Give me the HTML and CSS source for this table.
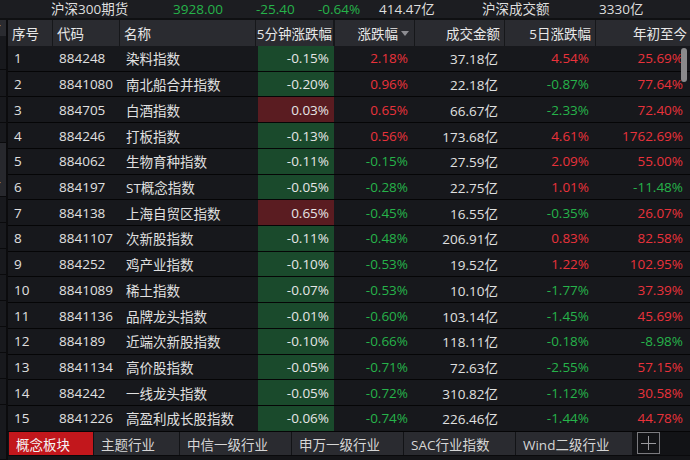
FILE: index.html
```html
<!DOCTYPE html>
<html lang="zh">
<head>
<meta charset="utf-8">
<link rel="stylesheet" href="styles.css">
</head>
<body>
<div class="top-bar">
  <span class="t-name">沪深300期货</span>
  <span class="green">3928.00</span>
  <span class="green">-25.40</span>
  <span class="green">-0.64%</span>
  <span>414.47亿</span>
  <span>沪深成交额</span>
  <span>3330亿</span>
</div>
<div class="main">
  <div class="strip">
    <div class="s-head"><span class="frag">今</span></div>
    <div class="s-dark s-h34"></div>
    <div class="s-dark s-h27"></div>
    <div class="s-dark s-h26"></div>
    <div class="s-dark s-h20"></div>
    <div class="s-light"><span class="frag frag-low">今</span></div>
    <div class="s-dark s-h26"></div>
    <div class="s-dark s-h26"></div>
    <div class="s-dark s-h26"></div>
    <div class="s-dark s-h26"></div>
    <div class="s-dark s-h26"></div>
    <div class="s-dark s-h26"></div>
    <div class="s-dark s-h26"></div>
    <div class="s-dark s-h26"></div>
    <div class="s-dark s-fill"></div>
  </div>
  <div class="panel">
    <div class="grid-row head">
      <div class="hc">序号</div>
      <div class="hc">代码</div>
      <div class="hc">名称</div>
      <div class="hc r tight">5分钟涨跌幅</div>
      <div class="hc r">涨跌幅<span class="tri"></span></div>
      <div class="hc r">成交金额</div>
      <div class="hc r">5日涨跌幅</div>
      <div class="hc r last">年初至今</div>
    </div>
    <div class="body">
      <div class="grid-row row"><div class="c">1</div><div class="c">884248</div><div class="c">染料指数</div><div class="c5"><div class="bg-g">-0.15%</div></div><div class="c r red">2.18%</div><div class="c r">37.18亿</div><div class="c r red">4.54%</div><div class="c r red">25.69%</div></div>
      <div class="grid-row row"><div class="c">2</div><div class="c">8841080</div><div class="c">南北船合并指数</div><div class="c5"><div class="bg-g">-0.20%</div></div><div class="c r red">0.96%</div><div class="c r">22.18亿</div><div class="c r green">-0.87%</div><div class="c r red">77.64%</div></div>
      <div class="grid-row row"><div class="c">3</div><div class="c">884705</div><div class="c">白酒指数</div><div class="c5"><div class="bg-r">0.03%</div></div><div class="c r red">0.65%</div><div class="c r">66.67亿</div><div class="c r green">-2.33%</div><div class="c r red">72.40%</div></div>
      <div class="grid-row row"><div class="c">4</div><div class="c">884246</div><div class="c">打板指数</div><div class="c5"><div class="bg-g">-0.13%</div></div><div class="c r red">0.56%</div><div class="c r">173.68亿</div><div class="c r red">4.61%</div><div class="c r red">1762.69%</div></div>
      <div class="grid-row row"><div class="c">5</div><div class="c">884062</div><div class="c">生物育种指数</div><div class="c5"><div class="bg-g">-0.11%</div></div><div class="c r green">-0.15%</div><div class="c r">27.59亿</div><div class="c r red">2.09%</div><div class="c r red">55.00%</div></div>
      <div class="grid-row row"><div class="c">6</div><div class="c">884197</div><div class="c">ST概念指数</div><div class="c5"><div class="bg-g">-0.05%</div></div><div class="c r green">-0.28%</div><div class="c r">22.75亿</div><div class="c r red">1.01%</div><div class="c r green">-11.48%</div></div>
      <div class="grid-row row"><div class="c">7</div><div class="c">884138</div><div class="c">上海自贸区指数</div><div class="c5"><div class="bg-r">0.65%</div></div><div class="c r green">-0.45%</div><div class="c r">16.55亿</div><div class="c r green">-0.35%</div><div class="c r red">26.07%</div></div>
      <div class="grid-row row"><div class="c">8</div><div class="c">8841107</div><div class="c">次新股指数</div><div class="c5"><div class="bg-g">-0.11%</div></div><div class="c r green">-0.48%</div><div class="c r">206.91亿</div><div class="c r red">0.83%</div><div class="c r red">82.58%</div></div>
      <div class="grid-row row"><div class="c">9</div><div class="c">884252</div><div class="c">鸡产业指数</div><div class="c5"><div class="bg-g">-0.10%</div></div><div class="c r green">-0.53%</div><div class="c r">19.52亿</div><div class="c r red">1.22%</div><div class="c r red">102.95%</div></div>
      <div class="grid-row row"><div class="c">10</div><div class="c">8841089</div><div class="c">稀土指数</div><div class="c5"><div class="bg-g">-0.07%</div></div><div class="c r green">-0.53%</div><div class="c r">10.10亿</div><div class="c r green">-1.77%</div><div class="c r red">37.39%</div></div>
      <div class="grid-row row"><div class="c">11</div><div class="c">8841136</div><div class="c">品牌龙头指数</div><div class="c5"><div class="bg-g">-0.01%</div></div><div class="c r green">-0.60%</div><div class="c r">103.14亿</div><div class="c r green">-1.45%</div><div class="c r red">45.69%</div></div>
      <div class="grid-row row"><div class="c">12</div><div class="c">884189</div><div class="c">近端次新股指数</div><div class="c5"><div class="bg-g">-0.10%</div></div><div class="c r green">-0.66%</div><div class="c r">118.11亿</div><div class="c r green">-0.18%</div><div class="c r green">-8.98%</div></div>
      <div class="grid-row row"><div class="c">13</div><div class="c">8841134</div><div class="c">高价股指数</div><div class="c5"><div class="bg-g">-0.05%</div></div><div class="c r green">-0.71%</div><div class="c r">72.63亿</div><div class="c r green">-2.55%</div><div class="c r red">57.15%</div></div>
      <div class="grid-row row"><div class="c">14</div><div class="c">884242</div><div class="c">一线龙头指数</div><div class="c5"><div class="bg-g">-0.05%</div></div><div class="c r green">-0.72%</div><div class="c r">310.82亿</div><div class="c r green">-1.12%</div><div class="c r red">30.58%</div></div>
      <div class="grid-row row"><div class="c">15</div><div class="c">8841226</div><div class="c">高盈利成长股指数</div><div class="c5"><div class="bg-g">-0.06%</div></div><div class="c r green">-0.74%</div><div class="c r">226.46亿</div><div class="c r green">-1.44%</div><div class="c r red">44.78%</div></div>
      <div class="scroll-thumb"></div>
    </div>
    <div class="tabs">
      <div class="tab active">概念板块</div>
      <div class="tab">主题行业</div>
      <div class="tab">中信一级行业</div>
      <div class="tab">申万一级行业</div>
      <div class="tab">SAC行业指数</div>
      <div class="tab">Wind二级行业</div>
      <div class="plus"><span class="ph"></span><span class="pv"></span></div>
    </div>
    <div class="foot"></div>
  </div>
</div>
</body>
</html>
```

FILE: styles.css
```css
* { box-sizing: border-box; }
html, body {
  margin: 0;
  padding: 0;
  width: 690px;
  height: 460px;
  overflow: hidden;
  background: #141518;
  font-family: "Open Sans", "Noto Sans CJK SC", sans-serif;
  font-size: 13.5px;
  color: #e2e2e2;
}
.green { color: #26b34a; }
.red { color: #e9323b; }

.top-bar {
  height: 18px;
  background: #1c1d21;
  border-bottom: 2px solid #0f1012;
  box-sizing: content-box;
  display: grid;
  grid-template-columns: 122px 83px 62px 61px 103px 117px auto;
  align-items: center;
  padding-left: 51px;
  line-height: 16px;
  white-space: nowrap;
  color: #dedede;
}

.main {
  display: flex;
  height: 440px;
}
.strip {
  width: 8px;
  border-right: 2px solid #0b0b0d;
  display: flex;
  flex-direction: column;
  overflow: hidden;
  flex: none;
}
.s-head {
  height: 16px;
  background: #2a2b30;
  overflow: hidden;
  line-height: 16px;
}
.frag {
  display: block;
  margin-left: -11px;
  font-size: 12px;
  color: #cfcfcf;
}
.frag-low { margin-top: 34px; }
.s-dark {
  background: #18191d;
  border-bottom: 1px solid #0a0a0c;
}
.s-h34 { height: 34px; }
.s-h27 { height: 27px; }
.s-h26 { height: 26px; }
.s-h20 { height: 20px; }
.s-fill { flex: 1; }
.s-light {
  height: 54px;
  background: #27282d;
  overflow: hidden;
  line-height: 16px;
  border-bottom: 1px solid #0a0a0c;
}

.panel {
  width: 682px;
  display: flex;
  flex-direction: column;
}
.grid-row {
  display: grid;
  grid-template-columns: 45px 67px 136px 79px 80px 90px 91px 94px;
}
.head {
  height: 26px;
  background: #2a2b30;
}
.hc {
  display: flex;
  align-items: center;
  padding-left: 4px;
  border-right: 1px solid #16171a;
  color: #e8e8e8;
  white-space: nowrap;
}
.hc.r { justify-content: flex-end; padding-right: 4px; padding-left: 0; }
.hc.tight { padding-right: 1px; border-right-width: 2px; }
.hc.last { border-right: none; padding-right: 3px; }
.tri {
  width: 0;
  height: 0;
  border-left: 4px solid transparent;
  border-right: 4px solid transparent;
  border-top: 5px solid #8d8d92;
  margin-left: 3px;
  margin-right: 1px;
}

.body {
  position: relative;
  height: 386px;
}
.row {
  height: 25.7333px;
  background: #17181c;
  border-bottom: 1px solid #050506;
}
.c {
  display: flex;
  align-items: center;
  padding-left: 6px;
  white-space: nowrap;
  color: #e0e0e0;
}
.c.r { justify-content: flex-end; padding-left: 0; padding-right: 7px; }
.c.r.red { color: #e9323b; }
.c.r.green { color: #26b34a; }
.c5 {
  padding: 0 1px 0 2px;
  display: flex;
}
.bg-g, .bg-r {
  flex: 1;
  display: flex;
  align-items: center;
  justify-content: flex-end;
  padding-right: 5px;
  color: #e6e6e6;
}
.bg-g { background: #1a4a2c; }
.bg-r { background: #5a1c21; }

.scroll-thumb {
  position: absolute;
  left: 673px;
  top: 2px;
  width: 6px;
  height: 34px;
  border-radius: 3px;
  background: #8a8a8c;
}

.tabs {
  height: 23px;
  display: grid;
  grid-template-columns: 84px 85px 111px 111px 111px 116px 23px;
  column-gap: 1px;
  padding-left: 1px;
  background: #121316;
}
.tab {
  background: #2a2b30;
  display: flex;
  align-items: center;
  padding-left: 7px;
  white-space: nowrap;
  color: #d6d6d6;
}
.tab.active {
  background: #c2171c;
  color: #f4f4f4;
}
.plus {
  margin-left: 4px;
  width: 23px;
  height: 22px;
  border: 1px solid #7a7a7e;
  position: relative;
}
.ph, .pv {
  position: absolute;
  background: #9a9a9e;
}
.ph { left: 3px; right: 3px; top: 10px; height: 1px; }
.pv { top: 3px; bottom: 3px; left: 10px; width: 1px; }

.foot {
  flex: 1;
  background: #141518;
  border-top: 1px solid #0a0a0c;
}
```
